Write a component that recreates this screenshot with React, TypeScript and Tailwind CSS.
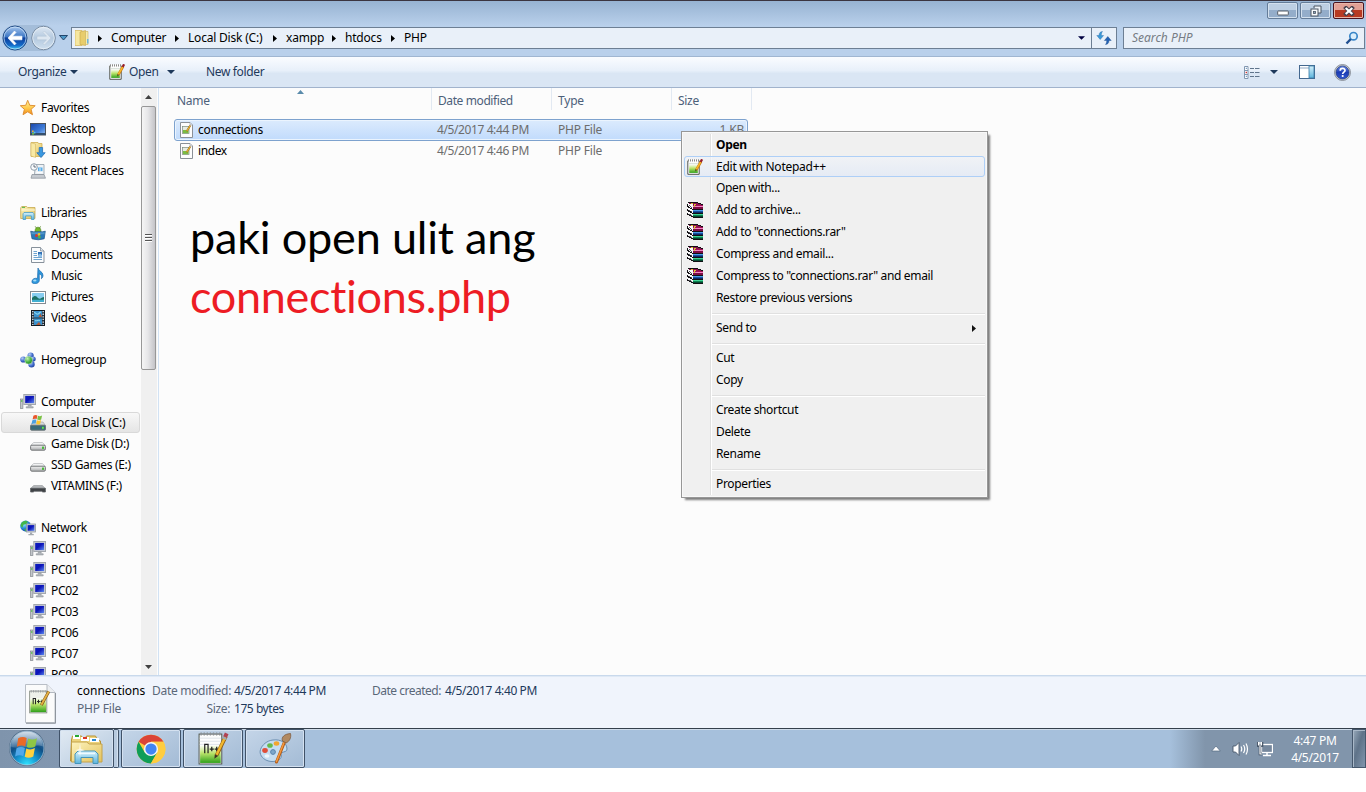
import type { ReactNode } from 'react';

function Svg({ w = 16, h = 16, vw, vh, children }: { w?: number; h?: number; vw?: number; vh?: number; children: ReactNode }) {
  return (
    <svg width={w} height={h} viewBox={`0 0 ${vw ?? w} ${vh ?? h}`} className="block shrink-0">
      {children}
    </svg>
  );
}

function Gradients() {
  return (
    <svg width="0" height="0" className="absolute">
      <defs>
        <linearGradient id="star" x1="0" y1="0" x2="0" y2="1"><stop offset="0" stopColor="#fff3a0" /><stop offset=".55" stopColor="#ffc94a" /><stop offset="1" stopColor="#f08a1c" /></linearGradient>
        <linearGradient id="screen" x1="0" y1="0" x2="1" y2="1"><stop offset="0" stopColor="#0a1dc0" /><stop offset=".45" stopColor="#0d14b8" /><stop offset="1" stopColor="#5b8af0" /></linearGradient>
        <linearGradient id="desk" x1="0" y1="0" x2="1" y2="1"><stop offset="0" stopColor="#1a45a8" /><stop offset=".6" stopColor="#3f7cd8" /><stop offset="1" stopColor="#9cc6f5" /></linearGradient>
        <linearGradient id="folder" x1="0" y1="0" x2="1" y2="1"><stop offset="0" stopColor="#fdf3bd" /><stop offset="1" stopColor="#e3c25c" /></linearGradient>
        <linearGradient id="green" x1="0" y1="0" x2="0" y2="1"><stop offset="0" stopColor="#fbfdf6" /><stop offset=".45" stopColor="#b9e36a" /><stop offset="1" stopColor="#2fa01a" /></linearGradient>
        <linearGradient id="cyan" x1="0" y1="0" x2="0" y2="1"><stop offset="0" stopColor="#d5f1fb" /><stop offset="1" stopColor="#5cb4dc" /></linearGradient>
        <linearGradient id="disk" x1="0" y1="0" x2="0" y2="1"><stop offset="0" stopColor="#f4f4f4" /><stop offset="1" stopColor="#a9abad" /></linearGradient>
        <linearGradient id="back" x1="0" y1="0" x2="0" y2="1"><stop offset="0" stopColor="#a9c8ee" /><stop offset=".45" stopColor="#3e78c6" /><stop offset=".5" stopColor="#0c3f9c" /><stop offset=".8" stopColor="#1469c8" /><stop offset="1" stopColor="#45d5fa" /></linearGradient>
        <linearGradient id="fwd" x1="0" y1="0" x2="0" y2="1"><stop offset="0" stopColor="#dfe9f4" /><stop offset=".5" stopColor="#b4c9df" /><stop offset="1" stopColor="#d0e0ef" /></linearGradient>
        <radialGradient id="orb" cx=".5" cy="1" r=".95"><stop offset="0" stopColor="#30e6ff" /><stop offset=".35" stopColor="#1593cf" /><stop offset=".65" stopColor="#0f4f86" /><stop offset="1" stopColor="#4d7ba6" /></radialGradient>
        <linearGradient id="orbgloss" x1="0" y1="0" x2="0" y2="1"><stop offset="0" stopColor="#fff" stopOpacity=".75" /><stop offset="1" stopColor="#fff" stopOpacity=".15" /></linearGradient>
        <linearGradient id="help" x1="0" y1="0" x2="0" y2="1"><stop offset="0" stopColor="#6a8be8" /><stop offset=".5" stopColor="#1c3cb4" /><stop offset="1" stopColor="#3157d0" /></linearGradient>
        <radialGradient id="globe" cx=".35" cy=".3" r=".8"><stop offset="0" stopColor="#a8f3ff" /><stop offset=".5" stopColor="#2a8fe0" /><stop offset="1" stopColor="#0c3a9a" /></radialGradient>
        <radialGradient id="ballBlue" cx=".35" cy=".3" r=".8"><stop offset="0" stopColor="#b5cdf5" /><stop offset=".6" stopColor="#3c68c8" /><stop offset="1" stopColor="#1c3a94" /></radialGradient>
        <radialGradient id="ballGreen" cx=".35" cy=".3" r=".8"><stop offset="0" stopColor="#c6f3b0" /><stop offset=".6" stopColor="#3fae3a" /><stop offset="1" stopColor="#1c7a22" /></radialGradient>
      </defs>
    </svg>
  );
}

const StarIcon = () => (
  <Svg><path d="M7.700 .3l2.100 5 5.400.4-4.100 3.600 1.400 5.400-4.800-2.900L3 14.700l1.400-5.400L.3 5.700l5.400-.4z" fill="url(#star)" stroke="#dc8a2c" strokeWidth=".9" strokeLinejoin="round" /></Svg>
);
const DesktopIcon = () => (
  <Svg><rect x=".5" y="2.500" width="15" height="11.500" fill="url(#desk)" stroke="#49525e" /><rect x="1" y="12" width="14" height="2" fill="#33506f" /><rect x="2" y="9.500" width="1.600" height="1.600" fill="#f2b632" /><rect x="3.800" y="10.800" width="1.600" height="1.600" fill="#5bc5e8" /><rect x="2" y="11.800" width="2" height="1.800" fill="#6fc043" /></Svg>
);
const DownloadsIcon = () => (
  <Svg><path d="M1 .5h7l.5 1H12v13H1z" fill="url(#folder)" stroke="#cfae54" strokeWidth=".8" /><path d="M5.500 2v13.500L1 14V.800z" fill="#f8e9a4" stroke="#cfae54" strokeWidth=".5" /><path d="M9.200 5.500h3.400v5.200h2.600L11 15.600l-4.200-4.900h2.400z" fill="#3a98e0" stroke="#1e6cb8" strokeWidth=".7" /></Svg>
);
const RecentIcon = () => (
  <Svg><path d="M5.500 1.500h8.500v10H4.500z" fill="#eef2f6" stroke="#8d99a5" strokeWidth=".8" /><rect x="8" y="4.500" width="4.500" height="3.600" fill="#5aaee8" /><path d="M6.500 9.500h6M10 5v3" stroke="#fff" strokeWidth=".8" /><path d="M2 11.500h12l1.500 3.700H1z" fill="#c5cad0" stroke="#868e97" strokeWidth=".7" /><circle cx="4" cy="4" r="3.300" fill="#f8fafc" stroke="#8795a3" strokeWidth=".9" /><path d="M4 1.800V4h2" stroke="#44525f" strokeWidth=".8" fill="none" /></Svg>
);
const LibraryIcon = () => (
  <Svg><path d="M.7 3l1-1.500h5l1 1H15v11H.7z" fill="url(#folder)" stroke="#c7a950" strokeWidth=".8" /><path d="M1.500 5H15" stroke="#fffbe0" /><path d="M2 2.400h3" stroke="#55b84a" /><path d="M3 14.500V8.800l1-1.300h9l1 1.300v5.700h-2.600v-3.600H5.600v3.600z" fill="url(#cyan)" stroke="#4a9cc4" strokeWidth=".8" /></Svg>
);
const AppsIcon = () => (
  <Svg><path d="M5 5.800a3 4.600 0 0 1 6 0z" fill="#77b92a" stroke="#4a7f16" strokeWidth=".6" /><path d="M5.200 .3l1.300 2M10.600 .3L9.400 2.500" stroke="#4a7f16" strokeWidth=".7" /><path d="M.7 5.200l2.800.6h9l2.800-.6-1.100 7.600q-6 2-12.200 0z" fill="#2a79b8" stroke="#1a5488" strokeWidth=".7" /><path d="M1.200 6.200h13.500v2H1.500z" fill="#69a8d6" opacity=".6" /><circle cx="6.500" cy="9.600" r="1.500" fill="#d93a2c" /><circle cx="9" cy="8.400" r="1.300" fill="#f0c52a" /><circle cx="9.300" cy="11" r="1.500" fill="#54b73e" /></Svg>
);
const DocumentIcon = () => (
  <Svg><path d="M1.500.5h9l3.500 3.500v11.500H1.500z" fill="#fbfcfd" stroke="#87919b" /><path d="M10.500.5V4h3.500" fill="#dde3e9" stroke="#87919b" strokeWidth=".8" /><path d="M3.500 4.500h3.500M3.500 6.500h3.500M3.500 8.500h3.500M3.500 10.500h8.500M3.500 12.500h8.500" stroke="#5d9aca" strokeWidth=".9" /><rect x="8" y="5" width="4" height="4.400" fill="#2f6fb4" /><path d="M8 8l2-1.400 2 1.400v1.400H8z" fill="#8ac0ea" /></Svg>
);
const MusicIcon = () => (
  <Svg><path d="M8 0c.5 3.200 4.800 3.400 5 7.200.1 1.500-.6 2.700-1.600 3.500.9-2.900-.3-4.300-2.200-4.800l.1 6.400c0 2-2 3.500-4.500 3.500S1.700 14.500 2 13c.3-1.900 2.600-3.200 5.500-2.600z" fill="#2f98dc" stroke="#1b68ac" strokeWidth=".7" /><ellipse cx="4.800" cy="12.600" rx="1.700" ry="1" fill="#a6dcf7" /></Svg>
);
const PicturesIcon = () => (
  <Svg><rect x=".5" y="2.500" width="15" height="12" fill="#fff" stroke="#858b92" /><rect x="2" y="4" width="12" height="9" fill="#88cdf0" /><path d="M2 9c3-3 4-2 6 0s4-1 6-1v5H2z" fill="#1d7165" /><path d="M2 11c3-1 8 .5 12-.5V13H2z" fill="#42afd0" /></Svg>
);
const VideosIcon = () => (
  <Svg><rect x="1.500" y=".5" width="13" height="15" fill="#27333e" stroke="#151c22" /><rect x="4" y="1" width="8" height="6.500" fill="#3b91cc" /><rect x="4" y="8.500" width="8" height="6.500" fill="#3b91cc" /><path d="M4 2.500c2 0 2 2 4 1.500s1-2 3-2M5 10.500c2 1 3-1 5 0" stroke="#8bd8f2" strokeWidth="1.200" fill="none" /><path d="M8.500 7l2-3.500 1.500 3.500zM6 15l3-3 2 3z" fill="#b55a34" /><path d="M2.800 1v14M13.200 1v14" stroke="#d8e2ea" strokeWidth="1.400" strokeDasharray="1.3 1.3" /></Svg>
);
const HomegroupIcon = () => (
  <Svg><circle cx="3.300" cy="7.500" r="3.100" fill="url(#ballBlue)" /><circle cx="10.600" cy="3.500" r="3.100" fill="url(#ballBlue)" /><circle cx="11.500" cy="12.300" r="3.200" fill="url(#ballBlue)" /><circle cx="13.200" cy="7" r="2.500" fill="url(#ballBlue)" /><circle cx="8.600" cy="8.200" r="3.900" fill="url(#ballGreen)" stroke="#e5f5e5" strokeWidth=".5" /></Svg>
);
const ComputerIcon = () => (
  <Svg><rect x=".5" y="5" width="2.400" height="9.500" fill="#c2c6ca" stroke="#82888e" strokeWidth=".7" /><path d="M1.100 7h1.300" stroke="#46c23b" strokeWidth="1.500" /><rect x="3.800" y=".5" width="11.700" height="10" fill="#cfd2d6" stroke="#a3a8ae" /><rect x="5.200" y="1.900" width="8.900" height="7.200" fill="url(#screen)" /><path d="M8.200 11h3v1.700h2V14h-7v-1.300h2z" fill="#b3b7bc" stroke="#8b9197" strokeWidth=".5" /></Svg>
);
const NetworkIcon = () => (
  <Svg><circle cx="5.600" cy="6" r="5.400" fill="url(#globe)" /><path d="M3 1.600c2-1.200 4-.8 4.800.3L6.500 4l-3 .8L2.400 7.800.6 6c0-2 1-3.600 2.400-4.400zM4 8.500l3 1-1.500 2z" fill="#43b649" /><rect x="6.500" y="4" width="9" height="8" fill="#cdd2d8" stroke="#9298a0" strokeWidth=".8" /><rect x="7.600" y="5.100" width="6.800" height="5.700" fill="url(#screen)" /><path d="M10 12.400h2.200v1.600h1.600v1.200H8.400V14H10z" fill="#a3a9b0" /></Svg>
);
const SystemDiskIcon = () => (
  <Svg><path d="M3 7h10l2.500 3.500H.5z" fill="#d5dadd" stroke="#8c9194" strokeWidth=".5" /><rect x=".5" y="10.200" width="15" height="5" rx="1" fill="#396a78" stroke="#6a7478" /><rect x="12" y="11.800" width="1.800" height="2" fill="#5eea45" /><path d="M3.400 .8c1.500-1 2.700-1 4-.3L6.600 4.300c-1.300-.7-2.700-.5-4 .3z" fill="#e9572c" /><path d="M8 .8c1.300.6 2.600.5 4.100-.2L11.200 4.400c-1.400.8-2.700.8-4 .2z" fill="#7ac143" /><path d="M2.400 5.300c1.500-.9 2.700-.9 4-.3L5.500 8.800c-1.200-.6-2.500-.5-4 .3z" fill="#4a9fe0" /><path d="M7 5.300c1.300.6 2.600.5 4.100-.2L10.200 8.900c-1.400.8-2.700.8-4 .2z" fill="#fcc62d" /></Svg>
);
const DiskIcon = () => (
  <Svg><path d="M3.600 6.500h8.800l3 3H.6z" fill="#f1f2f3" stroke="#a8abae" strokeWidth=".6" /><rect x=".6" y="9.200" width="14.800" height="5" rx="1.300" fill="url(#disk)" stroke="#747779" /><rect x="12" y="10.600" width="2" height="2.300" fill="#48ba38" /></Svg>
);
const RemovableIcon = () => (
  <Svg><path d="M3.600 7.500h8.800l3 3H.6z" fill="#b4b7ba" stroke="#96999c" strokeWidth=".6" /><path d="M.6 10.300h14.800v3.700H12.800l-1.300-.8h-7L3.200 14H.6z" fill="#3f4246" stroke="#5b5e62" strokeWidth=".8" /></Svg>
);

function NotepadIcon() {
  return (
    <Svg>
      <path d="M.8 1.500h11.400v13.800H.8z" fill="#fcfcfc" stroke="#53564f" />
      <path d="M.5 1.200h12" stroke="#fff" strokeWidth="1.600" />
      <path d="M1.500 .3v2.200M3.500 .3v2.200M5.500 .3v2.200M7.500 .3v2.200M9.500 .3v2.200M11.500 .3v2.200" stroke="#7d7d7d" strokeWidth=".9" />
      <path d="M2 4.500h9M2 6h9" stroke="#c6d3c6" strokeWidth=".6" />
      <rect x="2.200" y="5.500" width="8.600" height="8.400" fill="url(#green)" />
      <path d="M14 2.600L9.300 10.800" stroke="#c47a14" strokeWidth="2.600" />
      <path d="M14 2.400L9.200 10.600" stroke="#fbb829" strokeWidth="1.500" />
      <path d="M13.600 3L15.100.3" stroke="#97202c" strokeWidth="2.300" />
      <path d="M8.200 12.400l.3-2.300 1.600 1z" fill="#4a3520" />
    </Svg>
  );
}

const PhpFileIcon = () => (
  <Svg><path d="M.5.5h9.500l2.500 2.500v12.500H.5z" fill="#fdfdfd" stroke="#8b9097" /><path d="M10 .5V3h2.500" fill="#e7eaee" stroke="#9ba0a7" strokeWidth=".7" /><rect x="2.500" y="4.500" width="6.500" height="7" fill="#e6ece4" stroke="#7c8a7c" strokeWidth=".7" /><rect x="3" y="8" width="5.500" height="3.200" fill="#7cbc42" /><path d="M10.300 3.500L6.700 9.300" stroke="#a1701e" strokeWidth="1.800" /><path d="M10.100 3.800L6.800 9" stroke="#f3bc33" strokeWidth="1" /></Svg>
);

const RarIcon = () => (
  <svg width="16" height="16" viewBox="0 0 16 16" className="block shrink-0" shapeRendering="crispEdges">
    <path d="M1 0h10v1h3v1h2v14H6v-1H4v-1H2v-1H0V2h1z" fill="#fafafa" />
    <path d="M0 1h1V0h10v1h3v1h2v1H6V2H3V1zM0 2h1v2h1v1h1v1h2v1h11v1H5V7H3V6H1V5H0zM0 7h1v1h1v1h2v1h1v1h11v1H5v-1H3v-1H1V9H0zM0 11h1v1h1v1h2v1h2v1h10v1H6v-1H4v-1H2v-1H0z" fill="#121014" />
    <path d="M2 1h9v1h3v1H6V2H2z" fill="#8a0f4c" />
    <path d="M2 3h1v1h1v1h1v1H4V5H3V4H2zM2 8h1v1h2v1H4V9H2zM2 12h2v1h1v1H4v-1H2z" fill="#55555c" />
    <path d="M6 3h10v1H6z" fill="#a01058" /><path d="M6 4h10v1H6z" fill="#f086c4" /><path d="M6 5h10v2H6z" fill="#7c0c44" />
    <path d="M6 8h10v1H6z" fill="#4a9ce8" /><path d="M6 9h10v1H6z" fill="#1650a2" /><path d="M6 10h10v1H6z" fill="#0a2c66" />
    <path d="M6 12h10v1H6z" fill="#3ed494" /><path d="M6 13h10v1H6z" fill="#0c8050" /><path d="M6 14h10v1H6z" fill="#064830" />
    <path d="M4 1h2v1H4zM7 2h2v1H7zM7 3h1v2H7z" fill="#d8c832" />
  </svg>
);

function LargeNotepad() {
  return (
    <Svg w={32} h={33} vw={30} vh={32}>
      <rect x="1.500" y="2" width="22" height="29" fill="#fdfdfd" stroke="#555b52" />
      <path d="M2 6h21M2 9h21M2 12h21" stroke="#d4dbe2" strokeWidth=".7" />
      <path d="M3.500 .5v3M6.500 .5v3M9.500 .5v3M12.500 .5v3M15.500 .5v3M18.500 .5v3M21.500 .5v3" stroke="#8b9096" strokeWidth="1.300" />
      <rect x="2.500" y="13" width="20" height="17" fill="url(#green)" />
      <path d="M7 20.500v-9M7 12h3.200v8.500M11.800 16.500h4M13.800 14.300v4.400M16.600 16.500h4M18.600 14.300v4.400" stroke="#222" strokeWidth="1.200" fill="none" />
      <path d="M27.500 4L18.500 22.500" stroke="#8e5a12" strokeWidth="3.600" />
      <path d="M27.300 4L18.500 22" stroke="#f1b82e" strokeWidth="2.300" />
      <path d="M26.600 5L28.300 1.300" stroke="#b04252" strokeWidth="3.800" />
      <path d="M25.700 6.900L26.600 5" stroke="#a3a8ae" strokeWidth="3.800" />
      <path d="M16.300 26l.5-4.400 3.200 1.600z" fill="#3f3220" />
    </Svg>
  );
}

const DetailFileIcon = () => (
  <Svg w={32} h={40}>
    <path d="M.5.5h21.500l8 8V38.500H.5z" fill="#fbfbfb" stroke="#b9bec6" />
    <path d="M1 39.300h29.500V9" stroke="#8f959d" fill="none" />
    <path d="M22 .5v8h8" fill="#eceef1" stroke="#b3b8c0" />
    <g transform="translate(3.500 5.500) scale(.78)">
      <rect x="1.500" y="2" width="22" height="28" fill="#eef1ea" stroke="#7b8378" />
      <path d="M3.500 1v3M6.500 1v3M9.500 1v3M12.500 1v3M15.500 1v3M18.500 1v3M21.500 1v3" stroke="#9b9fa4" strokeWidth="1.300" />
      <rect x="2.500" y="11" width="20" height="18" fill="url(#green)" />
      <path d="M6 19v-8M6 11.500h3v7.500M11 15.500h3.600M12.800 13.300v4.400M15.500 15.500h3.600M17.300 13.300v4.400" stroke="#222" strokeWidth="1.300" fill="none" />
      <path d="M26 2.500L16.500 20" stroke="#7d5518" strokeWidth="3.800" /><path d="M26 2.500L16.500 19.500" stroke="#e6b244" strokeWidth="2.300" />
    </g>
  </Svg>
);

const ExplorerIcon = () => (
  <Svg w={34} h={32}>
    <path d="M1.500 7l1-4h9l1 2h3l1-2h9l2 4 3 1v20h-30z" fill="#ecd37c" stroke="#b79337" />
    <rect x="3" y="2" width="7" height="4" fill="#fff" /><rect x="5" y="2" width="4" height="2" fill="#24a832" />
    <rect x="11" y="4" width="8" height="4" fill="#fff" /><rect x="13" y="4" width="4" height="2" fill="#dc3a28" />
    <rect x="20" y="5" width="9" height="4" fill="#fff" /><rect x="22" y="6" width="4" height="2" fill="#2d8ad0" />
    <path d="M1.500 9h15l3 2H32v18H1.500z" fill="url(#folder)" stroke="#c4a24a" />
    <path d="M5 30.500V21l3-3h17l3 3v9.500h-5V24.500H11v6z" fill="url(#cyan)" stroke="#4595ba" />
    <path d="M8 20.500h17" stroke="#eefaff" strokeWidth="1.500" />
    <path d="M10 10l.8 6 4 1.200-4 1-.8 6-.8-6-4-1 4-1.200z" fill="#fff" opacity=".75" />
  </Svg>
);

const ChromeIcon = () => (
  <Svg w={30} h={30} vw={48} vh={48}>
    <circle cx="24" cy="24" r="23" fill="#ffcd40" />
    <path d="M24 24L4.100 12.500A23 23 0 0 1 43.900 12.500H24z" fill="#db4437" />
    <path d="M4.100 12.500A23 23 0 0 0 23.800 47L34 29.500 24 24l-10 5.600z" fill="#0f9d58" />
    <path d="M34 29.700L23.900 47A23 23 0 0 0 43.900 12.500H24z" fill="#ffcd40" />
    <circle cx="24" cy="24" r="11.300" fill="#f6f6f6" /><circle cx="24" cy="24" r="9" fill="#4285f4" />
  </Svg>
);

const PaintIcon = () => (
  <Svg w={34} h={32}>
    <path d="M15 7c8-1 14 3 14 9 0 3-3 2.500-5 3.500s0 3-1 5c-2 4-9 5-14 3S1 21 2.500 16.500 9 7.500 15 7z" fill="#c5ddf1" stroke="#6c8fb1" />
    <ellipse cx="12" cy="12.500" rx="2.800" ry="2.300" fill="#66b94c" /><ellipse cx="18.500" cy="10.500" rx="2.800" ry="2.200" fill="#f2a62e" /><ellipse cx="7" cy="17.500" rx="2.800" ry="2.400" fill="#e04e38" /><circle cx="15" cy="19" r="2.400" fill="#7da7cb" stroke="#5884ad" /><ellipse cx="9" cy="23" rx="2.500" ry="1.700" fill="#ecf5fb" />
    <path d="M26.500 9L18.500 29" stroke="#b45a14" strokeWidth="3" strokeLinecap="round" /><path d="M26 9.500L18.500 28.500" stroke="#f29a42" strokeWidth="1.500" strokeLinecap="round" />
    <path d="M24.500 8c-1.500-4 2-7 8-7.500 1 4-1 8-4.500 9.500z" fill="#b28a62" stroke="#795438" strokeWidth=".7" />
  </Svg>
);

const StartOrb = () => (
  <Svg w={38} h={38}>
    <circle cx="19" cy="19" r="18" fill="#183b5c" opacity=".45" /><circle cx="19" cy="19" r="17" fill="url(#orb)" stroke="#c3dcec" strokeOpacity=".75" strokeWidth=".8" />
    <path d="M3 17.500C3.500 8 10.500 2.500 19 2.500S34.500 8 35 17.500C27 13.500 12 22 3 17.500z" fill="url(#orbgloss)" />
    <path d="M10.200 9.200c3.200-1.800 6-1.600 8.500-.3L17.200 17.400c-2.600-1.400-5.300-1.300-8.300.3z" fill="#e96a28" />
    <path d="M20.200 9.600c2.900 1.300 5.600 1.300 8.800-.4l-1.700 8.300c-3 1.600-5.800 1.600-8.600.4z" fill="#8fc645" />
    <path d="M8.500 19.200c3.100-1.700 5.800-1.600 8.400-.3L15.300 27.200c-2.500-1.300-5.300-1.200-8.200.4z" fill="#51a8ea" />
    <path d="M18.300 19.500c2.900 1.300 5.600 1.300 8.600-.4l-1.600 8.300c-3.100 1.700-5.800 1.600-8.600.4z" fill="#ffd13e" />
  </Svg>
);

function Caret({ dark = '#1e395b', w = 8 }: { dark?: string; w?: number }) {
  return <Svg w={w} h={4} vw={8} vh={4}><path d="M0 0h8L4 4z" fill={dark} /></Svg>;
}

const Crumb = ({ label, w }: { label: string; w: string }) => (
  <div className={`flex items-center ${w}`}>
    <Svg w={4} h={7}><path d="M0 0l4 3.500L0 7z" fill="#000" /></Svg>
    <span className="ml-[9px] whitespace-nowrap">{label}</span>
  </div>
);

function WindowFrame() {
  return (
    <header className="flex h-14 flex-col border-t border-[#3b3540] bg-linear-to-b from-[#97b3d2] to-[#b9d0eb] to-45%">
      <div className="flex h-[21px] items-start justify-end gap-[2px] pt-px pr-[3px]">
        <div className="flex h-[17px] w-[31px] items-center justify-center rounded-[2px] border border-[#647c98] bg-linear-to-b from-[#bdcfe3] from-45% to-[#94adca] to-50% shadow-[inset_0_0_0_1px_#d3e0ee]">
          <div className="pt-[4px]"><Svg w={12} h={6}><rect x=".7" y="1" width="10.600" height="4" rx=".5" fill="#fff" stroke="#555c66" /></Svg></div>
        </div>
        <div className="flex h-[17px] w-[31px] items-center justify-center rounded-[2px] border border-[#647c98] bg-linear-to-b from-[#bdcfe3] from-45% to-[#94adca] to-50% shadow-[inset_0_0_0_1px_#d3e0ee]">
          <Svg w={12} h={12}><path d="M4 1h7v7H8M4 3V1" fill="#eef3f8" stroke="#4d5662" /><rect x="1" y="4" width="7" height="7" fill="#f8fafc" stroke="#4d5662" /><rect x="3.500" y="6.500" width="2" height="2" fill="#8ba5c3" stroke="#4d5662" strokeWidth=".8" /></Svg>
        </div>
        <div className="mr-[-1px] flex h-[17px] w-[31px] items-center justify-center rounded-[2px] border border-[#4a1420] bg-linear-to-b from-[#e2a095] from-45% to-[#b83a22] to-50% shadow-[inset_0_0_0_1px_#e8b6a8]">
          <Svg w={12} h={10}><path d="M3 2l6 6M9 2L3 8" stroke="#4b424c" strokeWidth="4" strokeLinecap="square" /><path d="M2.700 2l6.600 6M9.300 2L2.700 8" stroke="#fff" strokeWidth="2.200" /></Svg>
        </div>
      </div>
      <div className="flex h-8 items-center">
        <Svg w={56} h={30}>
          <path d="M15 2h28a12 12 0 0 1 0 26H15A12 12 0 0 1 15 2z" fill="#98b2cf" opacity=".65" />
          <circle cx="15" cy="15" r="12" fill="url(#back)" stroke="#234e89" /><circle cx="15" cy="15" r="11" fill="none" stroke="#d5e9fc" strokeOpacity=".65" />
          <path d="M8 15l6.500-7 1.500 1.500-3.500 3.700H22v3.600h-9.500L16 20.500 14.500 22z" fill="#fff" stroke="#fff" strokeWidth=".6" />
          <circle cx="43.500" cy="15" r="11.700" fill="url(#fwd)" stroke="#75889e" /><circle cx="43.500" cy="15" r="10.800" fill="none" stroke="#eef5fb" strokeOpacity=".7" />
          <path d="M51 15l-6.500-7-1.500 1.500 3.500 3.700H37v3.600h9.500L43 20.500l1.500 1.500z" fill="#dde7f1" stroke="#b3c3d4" strokeWidth=".5" />
        </Svg>
        <div className="ml-[3px] w-[9px]"><Svg w={9} h={6}><path d="M.5.500h8L4.500 5z" fill="#4c98c8" stroke="#23466c" /></Svg></div>
        <div className="ml-[3px] flex h-[22px] w-[1046px] items-center border border-[#6d7f94] bg-[#e9f0f9] text-black">
          <div className="ml-[3px] w-[23px]"><Svg><path d="M0 .5h7v15H0z" fill="#f6e7a0" stroke="#d2b558" strokeWidth=".7" /><path d="M5 2l5.500-1.500v15L5 14.500z" fill="#e8cd6c" stroke="#c6a548" strokeWidth=".6" /><path d="M10.500 1.500h2.500v13h-2.500z" fill="#f7ecae" stroke="#cdb158" strokeWidth=".6" /><rect x="12" y="9" width="1.500" height="4.500" fill="#6fb5dc" /></Svg></div>
          <Crumb label="Computer" w="w-[77px]" />
          <Crumb label="Local Disk (C:)" w="w-[98px]" />
          <Crumb label="xampp" w="w-[59px]" />
          <Crumb label="htdocs" w="w-[59px]" />
          <Crumb label="PHP" w="w-[60px]" />
          <div className="ml-auto flex h-full items-center">
            <Caret dark="#000040" w={7} />
            <div className="ml-[6px] flex h-full w-[25px] items-center justify-center border-l border-[#6d7f94]">
              <Svg><path d="M6.500 1.500c-2 .3-3.500 1-3.500 4H.8l3.400 4 3.400-4H5.300c0-2 .4-3 1.200-4z" fill="#3a9ad8" stroke="#2868a8" strokeWidth=".4" /><path d="M9.500 14.500c2-.3 3.500-1 3.500-4h2.200l-3.400-4-3.400 4h2.300c0 2-.4 3-1.200 4z" fill="#2462b4" stroke="#19498c" strokeWidth=".4" /></Svg>
            </div>
          </div>
        </div>
        <div className="ml-[6px] flex h-[22px] w-[242px] items-center border border-[#6d7f94] bg-[#e9f0f9] pr-[5px] pl-[8px]">
          <span className="tracking-[0px] text-[#767c84] italic">Search PHP</span>
          <div className="ml-auto"><Svg w={14} h={14}><circle cx="8.500" cy="5.200" r="3.700" fill="#dbeefb" stroke="#3a86c8" strokeWidth="1.700" /><path d="M5.800 8L1.500 12.500" stroke="#204f90" strokeWidth="2.400" /></Svg></div>
        </div>
      </div>
    </header>
  );
}

function Toolbar() {
  return (
    <div className="flex h-8 items-center border-t border-b border-t-[#a0b6d1] border-b-[#a1b3cc] bg-linear-to-b from-[#fafcff] via-[#e8f0fa] via-45% to-[#dae6f4] to-55% pl-[18px] text-[#1e395b]">
      <div className="flex w-[91px] items-center"><span className="w-[52px] tracking-[-0.35px]">Organize</span><Caret /></div>
      <div className="flex w-[97px] items-center"><NotepadIcon /><span className="ml-[4px] w-[38px] tracking-[-0.35px]">Open</span><Caret /></div>
      <span className="tracking-[-0.35px]">New folder</span>
      <div className="ml-auto flex items-center">
        <Svg w={16} h={13}><path d="M.5.500h3.500v12H.5zM.5 4.500H4M.5 8.500H4" fill="#fff" stroke="#8197b0" /><rect x="1.800" y="1.800" width="1" height="1" fill="#2c6aa8" /><rect x="1.600" y="5.800" width="1.400" height="1.400" fill="#c33" /><rect x="1.800" y="9.800" width="1" height="1" fill="#2c6aa8" /><path d="M6 2.500h4M11 2.500h4.500M6 6.500h4M11 6.500h4.500M6 10.500h4M11 10.500h4.500" stroke="#60758c" /></Svg>
        <div className="ml-[10px]"><Caret /></div>
        <div className="ml-[21px]"><Svg w={16} h={14}><rect x=".5" y=".5" width="15" height="13" fill="#fff" stroke="#44688f" /><path d="M1 3h9" stroke="#91a9c4" /><rect x="10" y="1" width="5" height="12" fill="url(#cyan)" stroke="#3b7ca8" strokeWidth=".8" /></Svg></div>
        <div className="mr-[15px] ml-[19px]">
          <svg width="17" height="17" viewBox="0 0 17 17" className="block"><circle cx="8.500" cy="8.500" r="8" fill="#c5c9ce" stroke="#7b828c" strokeWidth=".8" /><circle cx="8.500" cy="8.500" r="6.500" fill="url(#help)" stroke="#203a80" strokeWidth=".7" /><path d="M6.200 6.700c0-3 4.800-3 4.800-.2 0 1.600-2.300 1.600-2.300 3.400" fill="none" stroke="#fff" strokeWidth="1.700" /><circle cx="8.700" cy="12" r="1.100" fill="#fff" /></svg>
        </div>
      </div>
    </div>
  );
}

type NavEntry = { label: string; icon: ReactNode; top?: boolean; active?: boolean } | null;

const pcs: NavEntry[] = ['PC01', 'PC01', 'PC02', 'PC03', 'PC06', 'PC07', 'PC08'].map((label) => ({ label, icon: <ComputerIcon /> }));

const navigation: NavEntry[] = [
  { label: 'Favorites', icon: <StarIcon />, top: true },
  { label: 'Desktop', icon: <DesktopIcon /> },
  { label: 'Downloads', icon: <DownloadsIcon /> },
  { label: 'Recent Places', icon: <RecentIcon /> },
  null,
  { label: 'Libraries', icon: <LibraryIcon />, top: true },
  { label: 'Apps', icon: <AppsIcon /> },
  { label: 'Documents', icon: <DocumentIcon /> },
  { label: 'Music', icon: <MusicIcon /> },
  { label: 'Pictures', icon: <PicturesIcon /> },
  { label: 'Videos', icon: <VideosIcon /> },
  null,
  { label: 'Homegroup', icon: <HomegroupIcon />, top: true },
  null,
  { label: 'Computer', icon: <ComputerIcon />, top: true },
  { label: 'Local Disk (C:)', icon: <SystemDiskIcon />, active: true },
  { label: 'Game Disk (D:)', icon: <DiskIcon /> },
  { label: 'SSD Games (E:)', icon: <DiskIcon /> },
  { label: 'VITAMINS (F:)', icon: <RemovableIcon /> },
  null,
  { label: 'Network', icon: <NetworkIcon />, top: true },
  ...pcs,
];

function Sidebar() {
  return (
    <aside className="flex w-[159px] shrink-0 border-r border-[#d2e2f3]">
      <nav className="h-full w-[141px] shrink-0 overflow-hidden pt-[9px] pl-px tracking-[-0.34px] text-black">
        {navigation.map((entry, i) =>
          entry === null ? (
            <div key={i} className="h-[21px]" />
          ) : (
            <div
              key={i}
              className={`flex h-[21px] w-[139px] items-center rounded-[3px] border whitespace-nowrap ${entry.active ? 'border-[#d9d9d9] bg-linear-to-b from-[#f8f8f8] to-[#e5e5e5] tracking-[-0.2px]' : 'border-transparent'} ${entry.top ? 'gap-[5px] pl-[18px]' : 'gap-[5px] pl-[28px]'}`}
            >
              {entry.icon}
              <span>{entry.label}</span>
            </div>
          ),
        )}
      </nav>
      <div className="flex w-[16px] flex-col items-center bg-[#f0f0f0] pr-px">
        <div className="flex h-[18px] items-center"><Svg w={7} h={4}><path d="M0 4h7L3.500 0z" fill="#404040" /></Svg></div>
        <div className="flex h-[264px] w-[15px] flex-col items-center justify-center gap-px rounded-[2px] border border-[#979797] bg-linear-to-r from-[#f5f5f5] via-[#e6e6e8] via-45% to-[#c4c4c8]">
          <div className="h-[2px] w-[7px] border-t border-[#555] bg-white" />
          <div className="h-[2px] w-[7px] border-t border-[#555] bg-white" />
          <div className="h-[2px] w-[7px] border-t border-[#555] bg-white" />
        </div>
        <div className="mt-auto flex h-[17px] items-center"><Svg w={7} h={4}><path d="M0 0h7L3.500 4z" fill="#404040" /></Svg></div>
      </div>
    </aside>
  );
}

function FileList() {
  return (
    <main className="flex flex-1 flex-col pl-[15px]">
      <div className="flex h-[25px] text-[#4c607a]">
        <div className="flex w-[257px] pl-[3px]">
          <span className="w-[32px] pt-[5px] tracking-[-0.3px]">Name</span>
          <div className="ml-[88px] pt-[2px]"><Svg w={7} h={4}><path d="M0 4h7L3.500 0z" fill="#5a8bab" /></Svg></div>
        </div>
        <div className="h-[22px] w-[120px] border-l border-[#e2e9f2] pt-[5px] pl-[6px] tracking-[-0.4px]">Date modified</div>
        <div className="h-[22px] w-[120px] border-l border-[#e2e9f2] pt-[5px] pl-[6px]">Type</div>
        <div className="h-[22px] w-[81px] border-x border-[#e2e9f2] pt-[5px] pl-[6px] tracking-[-0.3px]">Size</div>
      </div>
      <div className="mt-[6px] flex h-[22px] w-[574px] items-center rounded-[3px] border border-[#7da2ce] bg-linear-to-b from-[#dcebfd] to-[#c1dbfc] pl-[5px] text-[#6d6d6d] shadow-[inset_0_0_0_1px_#ebf4fe]">
        <PhpFileIcon />
        <span className="ml-[2px] w-[239px] tracking-[-0.3px] text-black">connections</span>
        <span className="w-[121px] tracking-[-0.4px]">4/5/2017 4:44 PM</span>
        <span>PHP File</span>
        <span className="mr-[3px] ml-auto">1 KB</span>
      </div>
      <div className="flex h-[20px] w-[574px] items-center pl-[6px] text-[#6d6d6d]">
        <PhpFileIcon />
        <span className="ml-[2px] w-[239px] tracking-[-0.4px] text-black">index</span>
        <span className="w-[121px] tracking-[-0.4px]">4/5/2017 4:46 PM</span>
        <span>PHP File</span>
      </div>
      <div className="mt-[47px] ml-[16px] w-[400px] font-[Lato,sans-serif] text-[45px] leading-[59px] tracking-[-0.2px] whitespace-nowrap text-black">
        <p>paki open ulit ang</p>
        <p className="tracking-[-0.3px] text-[#ed1c24]">connections.php</p>
      </div>
    </main>
  );
}

type MenuEntry = { label: string; icon?: ReactNode; kind?: 'bold' | 'hover' | 'submenu' } | null;

const menu: MenuEntry[] = [
  { label: 'Open', kind: 'bold' },
  { label: 'Edit with Notepad++', icon: <NotepadIcon />, kind: 'hover' },
  { label: 'Open with...' },
  { label: 'Add to archive...', icon: <RarIcon /> },
  { label: 'Add to "connections.rar"', icon: <RarIcon /> },
  { label: 'Compress and email...', icon: <RarIcon /> },
  { label: 'Compress to "connections.rar" and email', icon: <RarIcon /> },
  { label: 'Restore previous versions' },
  null,
  { label: 'Send to', kind: 'submenu' },
  null,
  { label: 'Cut' },
  { label: 'Copy' },
  null,
  { label: 'Create shortcut' },
  { label: 'Delete' },
  { label: 'Rename' },
  null,
  { label: 'Properties' },
];

function ContextMenu() {
  return (
    <div className="absolute top-[131px] left-[681px] w-[307px] border border-[#979797] bg-[#f0f0f0] p-[2px] tracking-[-0.34px] text-black shadow-[3px_3px_2px_-1px_#7c7c7c,inset_0_0_0_1px_#f8f8f8]">
      <div className="bg-[linear-gradient(to_right,transparent_26px,#e0e0e0_26px,#e0e0e0_27px,#fff_27px,#fff_28px,transparent_28px)]">
        {menu.map((entry, i) =>
          entry === null ? (
            <div key={i} className="h-2 pt-[4px] pl-[28px]"><div className="h-[2px] border-t border-[#e0e0e0] bg-white" /></div>
          ) : (
            <div
              key={i}
              className={`flex items-center rounded-[3px] border ${entry.kind === 'hover' ? 'h-[21px] border-[#aecff7] bg-linear-to-b from-[#f0f3f8]/70 to-[#e3eaf6]/80 tracking-[-0.25px]' : 'h-[22px] border-transparent'} ${entry.kind === 'bold' ? 'font-bold' : ''}`}
            >
              <div className="w-[31px] pl-[2px]">{entry.icon}</div>
              <span className="whitespace-nowrap">{entry.label}</span>
              {entry.kind === 'submenu' && <div className="mr-[8px] ml-auto"><Svg w={4} h={7}><path d="M0 0l4 3.500L0 7z" fill="#111" /></Svg></div>}
            </div>
          ),
        )}
      </div>
    </div>
  );
}

function DetailsPane() {
  return (
    <footer className="flex h-[53px] border-t border-[#c9d9ec] bg-[#f0f4fc] leading-[18px] whitespace-nowrap text-[#5a6779] shadow-[inset_0_1px_0_#dfe9f5]">
      <div className="ml-[25px] w-[52px] pt-[8px]"><DetailFileIcon /></div>
      <div className="w-[75px] pt-[6px]"><p className="tracking-[0px] text-black">connections</p><p>PHP File</p></div>
      <div className="w-[78px] pt-[6px] text-right"><p className="tracking-[-0.3px]">Date modified:</p><p className="tracking-[-0.35px]">Size:</p></div>
      <div className="w-[142px] pt-[6px] pl-[4px] text-[#1e395b]"><p className="tracking-[-0.4px]">4/5/2017 4:44 PM</p><p className="tracking-[-0.45px]">175 bytes</p></div>
      <div className="w-[69px] pt-[6px] tracking-[-0.5px]">Date created:</div>
      <div className="pt-[6px] pl-[4px] tracking-[-0.4px] text-[#1e395b]">4/5/2017 4:40 PM</div>
    </footer>
  );
}

function TaskButton({ children, stacked }: { children: ReactNode; stacked?: boolean }) {
  return (
    <div className={`flex h-[39px] items-center justify-center rounded-[2px] border border-[#405268] shadow-[inset_0_0_0_1px_#d4e1f0] ${stacked ? 'w-[55px] bg-linear-to-br from-[#e1eaf3] to-[#b3c8de]' : 'w-[60px] bg-linear-to-br from-[#c4d5e8] to-[#a3bbd5]'}`}>
      {children}
    </div>
  );
}

function Taskbar() {
  return (
    <div className="flex h-10 border-t border-[#343f4c] bg-[linear-gradient(to_right,#7f94ac_0,#8297b0_60px,#a6c0dc_62px,#a6c0dc_1170px,#8195ab_1205px,#8195ab_100%)] shadow-[inset_0_1px_0_#d0dcea]">
      <div className="w-[59px] pl-[8px]"><StartOrb /></div>
      <div className="flex gap-[2px]">
        <div className="flex">
          <TaskButton stacked><ExplorerIcon /></TaskButton>
          <div className="h-[39px] w-[5px] rounded-r-[2px] border-y border-r border-[#405268] bg-[#b7cadf] shadow-[inset_-1px_0_0_#d4e1f0]" />
        </div>
        <TaskButton><ChromeIcon /></TaskButton>
        <TaskButton><LargeNotepad /></TaskButton>
        <TaskButton><PaintIcon /></TaskButton>
      </div>
      <div className="ml-auto flex items-center text-white">
        <Svg w={10} h={7}><path d="M.7 6L5 1l4.300 5z" fill="#fff" stroke="#546a82" strokeWidth=".7" /></Svg>
        <div className="ml-[11px]"><Svg w={17} h={16}><path d="M1 5h2.500L7 1.500v13L3.500 11H1z" fill="#fff" stroke="#46566a" strokeWidth=".9" /><path d="M9 5.500q1.500 2.500 0 5M11.500 4q2.500 4 0 8M14 2.500q3 5.500 0 11" fill="none" stroke="#fff" strokeWidth="1.200" /></Svg></div>
        <div className="ml-[8px]"><Svg w={16} h={16}><rect x="4.500" y="3.500" width="11" height="8" fill="#76889d" stroke="#fff" strokeWidth="1.300" /><path d="M10 12v2M6 14.500h8" stroke="#fff" strokeWidth="1.500" /><path d="M1 1v3.500h4V1M3 5v8h2" fill="none" stroke="#3b4a5c" strokeWidth="2.500" /><path d="M1.500 1v3h3V1M3 5v8h2M3 1v2" fill="none" stroke="#fff" strokeWidth="1.200" /></Svg></div>
        <div className="ml-[4px] w-[76px] text-center leading-[17px] tracking-[-0.3px]"><p>4:47 PM</p><p>4/5/2017</p></div>
        <div className="ml-[-1px] h-[39px] w-[14px] border border-[#46586d] bg-linear-to-br from-[#9aabbc] via-[#5f7389] via-45% to-[#8296ad] shadow-[inset_1px_1px_0_#a9b8c8]" />
      </div>
    </div>
  );
}

export default function App() {
  return (
    <div className="relative h-[792px] w-[1366px] overflow-hidden bg-white font-['Noto_Sans',sans-serif] text-[12px] leading-[16px] tracking-[-0.2px]">
      <Gradients />
      <WindowFrame />
      <Toolbar />
      <div className="flex h-[587px] bg-[#fcfcfc]">
        <Sidebar />
        <FileList />
      </div>
      <DetailsPane />
      <Taskbar />
      <ContextMenu />
    </div>
  );
}
